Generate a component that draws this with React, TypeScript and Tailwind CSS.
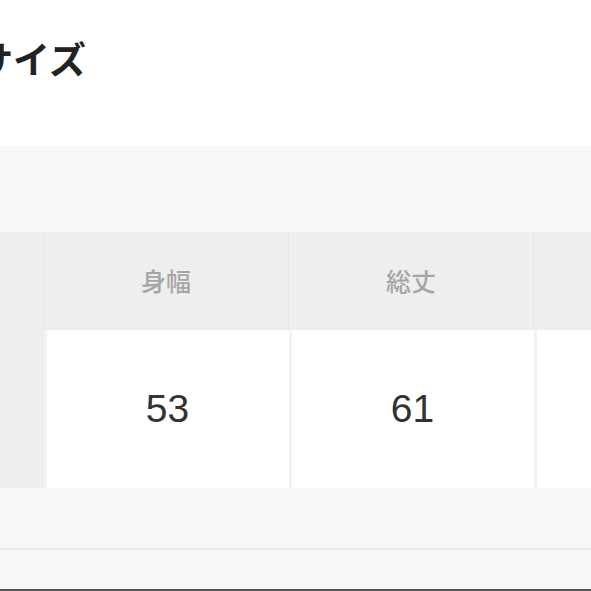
import React from "react";

const jp = { fontFamily: '"Noto Sans CJK JP", "Noto Sans", sans-serif' };
const num = { fontFamily: '"Liberation Sans", Arial, sans-serif' };

export default function App() {
  const cols = ["", "身幅", "総丈", ""];
  const vals = ["", "53", "61", ""];
  return (
    <div className="w-[591px] h-[591px] overflow-hidden bg-white flex flex-col">
      <div className="h-[146px] shrink-0 flex items-start">
        <h1
          className="ml-[-24px] mt-[31px] text-[37px] leading-[54px] font-bold text-[#222] whitespace-nowrap"
          style={jp}
        >
          サイズ
        </h1>
      </div>
      <div className="h-[86px] shrink-0 bg-[#f7f7f7]" />
      <div className="h-[98px] shrink-0 bg-[#eeeeee] flex ml-[-201px]">
        {cols.map((c, i) => (
          <div
            key={i}
            className="w-[245px] shrink-0 border-r border-[#e6e6e6] flex items-center justify-center text-[25px] text-[#a6a6a6] font-medium"
            style={jp}
          >
            {c}
          </div>
        ))}
      </div>
      <div className="h-[158px] shrink-0 bg-[#f3f3f3] flex ml-[-201px]">
        {vals.map((v, i) =>
          i === 0 ? (
            <div key={i} className="w-[245px] shrink-0 bg-[#eeeeee] mr-[1px]" />
          ) : (
            <div key={i} className="w-[245px] shrink-0 px-[1.5px]">
              <div
                className="h-full bg-white flex items-center justify-center text-[39px] text-[#333]"
                style={num}
              >
                {v}
              </div>
            </div>
          )
        )}
      </div>
      <div className="h-[60px] shrink-0 bg-[#f7f7f7]" />
      <div className="h-[2px] shrink-0 bg-[#ebebeb]" />
      <div className="h-[39px] shrink-0 bg-[#f7f7f7]" />
      <div className="h-[2px] shrink-0 bg-[#555555]" />
    </div>
  );
}
